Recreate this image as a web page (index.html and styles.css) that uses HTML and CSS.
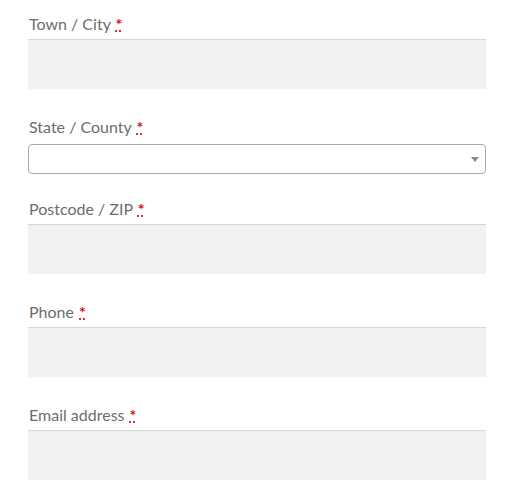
FILE: index.html
```html
<!DOCTYPE html>
<html>
<head>
<meta charset="utf-8">
<link rel="stylesheet" href="styles.css">
</head>
<body>
<form class="form">
  <div class="row row--first">
    <label class="label">Town / City <abbr class="req" title="required">*</abbr></label>
    <div class="input"></div>
  </div>
  <div class="row row--select">
    <label class="label">State / County <abbr class="req" title="required">*</abbr></label>
    <div class="select"><span class="arrow"></span></div>
  </div>
  <div class="row">
    <label class="label">Postcode / ZIP <abbr class="req" title="required">*</abbr></label>
    <div class="input"></div>
  </div>
  <div class="row">
    <label class="label">Phone <abbr class="req" title="required">*</abbr></label>
    <div class="input"></div>
  </div>
  <div class="row">
    <label class="label">Email address <abbr class="req" title="required">*</abbr></label>
    <div class="input"></div>
  </div>
</form>
</body>
</html>
```
FILE: styles.css
```css
html, body {
  margin: 0;
  padding: 0;
  background: #fff;
}
.form {
  width: 458px;
  margin-left: 28px;
  padding-top: 12px;
  display: flex;
  flex-direction: column;
  font-family: Lato, "Open Sans", sans-serif;
}
.row {
  display: flex;
  flex-direction: column;
  gap: 3px;
  margin-bottom: 26px;
}
.row--select {
  gap: 5px;
  margin-bottom: 23px;
}
.label {
  display: block;
  font-size: 16px;
  line-height: 24px;
  color: #6d6d6d;
  padding-left: 1px;
}
.req {
  color: #e2061b;
  text-decoration: underline dotted;
  text-decoration-color: #c00;
  border: 0;
  font-weight: 700;
  margin-left: 1px;
}
.input {
  height: 50px;
  background: #f2f2f2;
  box-shadow: inset 0 1px 1px rgba(0, 0, 0, 0.125);
  box-sizing: border-box;
}
.select {
  height: 30px;
  box-sizing: border-box;
  border: 1px solid #aaa;
  border-radius: 4px;
  background: #fff;
  display: flex;
  align-items: center;
  justify-content: flex-end;
  padding-right: 6px;
}
.arrow {
  width: 0;
  height: 0;
  border-left: 4px solid transparent;
  border-right: 4px solid transparent;
  border-top: 5px solid #888;
}
```
